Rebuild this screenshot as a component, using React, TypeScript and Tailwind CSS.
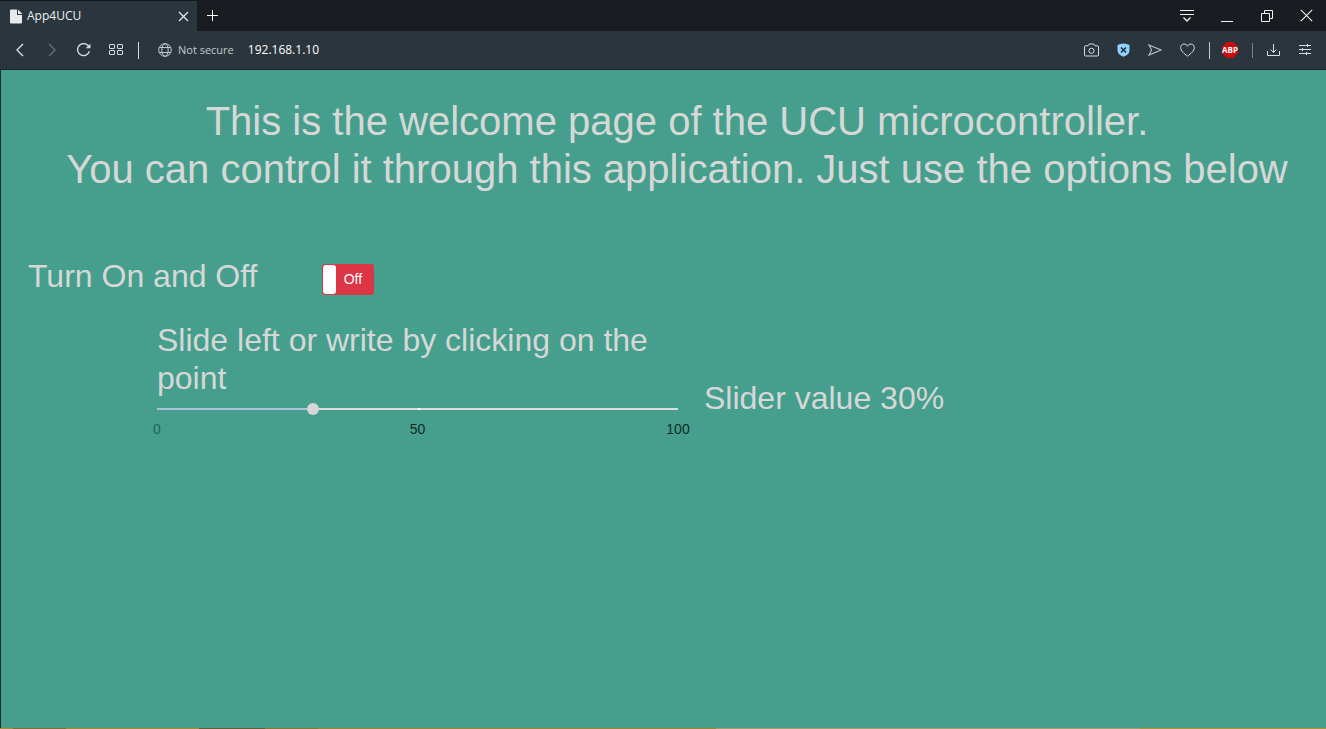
import { useState } from 'react';
import type { ReactNode } from 'react';

const iconProps = {
  fill: 'none',
  stroke: 'currentColor',
  strokeWidth: 1,
  'aria-hidden': true,
} as const;

function IconButton({ label, className = 'w-8', children }: { label: string; className?: string; children: ReactNode }) {
  return (
    <button type="button" aria-label={label} className={`flex h-8 shrink-0 items-center justify-center ${className}`}>
      {children}
    </button>
  );
}

function TabBar() {
  return (
    <div className="flex h-[31px] items-stretch bg-[#191d21]">
      <div className="flex w-[197px] items-center border-t border-[#14181c] bg-[#2b353d] pl-[10px] text-[#eceff1]">
        <svg width="13" height="15" viewBox="0 0 13 15" aria-hidden="true">
          <path d="M1 0.5H7V6H12V13.5Q12 14.5 11 14.5H1Q0 14.5 0 13.5V1.5Q0 0.5 1 0.5Z" fill="#e6eaec" />
          <path d="M8 0.5L12.5 5H8Z" fill="#e6eaec" />
        </svg>
        <span className="ml-1 flex-1 text-xs">App4UCU</span>
        <button type="button" aria-label="Close tab" className="flex h-7 w-7 items-center justify-center">
          <svg width="11" height="11" viewBox="0 0 11 11" {...iconProps}>
            <path d="M1 1L10 10M10 1L1 10" strokeWidth="1.2" />
          </svg>
        </button>
      </div>
      <button type="button" aria-label="New tab" className="flex w-[30px] items-center justify-center text-white">
        <svg width="11" height="11" viewBox="0 0 11 11" {...iconProps}>
          <path d="M5.5 0V11M0 5.5H11" />
        </svg>
      </button>
      <div className="ml-auto flex items-center text-[#f0f2f3]">
        <IconButton label="Tab menu" className="w-10">
          <svg width="14" height="14" viewBox="0 0 14 14" {...iconProps}>
            <path d="M0 1.5H14M0 5.5H14" />
            <path d="M3.5 8.5L7 12L10.5 8.5" strokeWidth="1.3" />
          </svg>
        </IconButton>
        <IconButton label="Minimize" className="w-10">
          <svg width="12" height="14" viewBox="0 0 12 14" {...iconProps}>
            <path d="M0 12.5H12" />
          </svg>
        </IconButton>
        <IconButton label="Restore" className="w-10">
          <svg width="12" height="12" viewBox="0 0 12 12" {...iconProps}>
            <path d="M0.5 3.5H8.5V11.5H0.5ZM3.5 3.5V0.5H11.5V8.5H8.5" />
          </svg>
        </IconButton>
        <IconButton label="Close window" className="w-[39px]">
          <svg width="13" height="13" viewBox="0 0 13 13" {...iconProps}>
            <path d="M0.8 0.8L12.2 12.2M12.2 0.8L0.8 12.2" strokeWidth="1.1" />
          </svg>
        </IconButton>
      </div>
    </div>
  );
}

function Toolbar() {
  return (
    <div className="flex h-[39px] items-center border-b border-[#142a2b] bg-[#2b353d] pl-1 text-[#d9dde0]">
      <IconButton label="Back">
        <svg width="8" height="14" viewBox="0 0 8 14" {...iconProps}>
          <path d="M7 1L1 7L7 13" strokeWidth="1.4" />
        </svg>
      </IconButton>
      <IconButton label="Forward" className="w-8 text-[#65717a]">
        <svg width="8" height="14" viewBox="0 0 8 14" {...iconProps}>
          <path d="M1 1L7 7L1 13" strokeWidth="1.3" />
        </svg>
      </IconButton>
      <IconButton label="Reload">
        <svg width="14" height="14" viewBox="0 0 14 14" {...iconProps}>
          <path d="M12.4 8.2A6 6 0 1 1 11.3 2.8L13 4.5" strokeWidth="1.3" />
          <path d="M13.4 0.6V5.3H8.8Z" fill="currentColor" stroke="none" />
        </svg>
      </IconButton>
      <IconButton label="Speed dial">
        <svg width="14" height="12" viewBox="0 0 14 12" {...iconProps}>
          <rect x="0.5" y="0.5" width="5" height="4" rx="0.5" />
          <rect x="8.5" y="0.5" width="5" height="4" rx="0.5" />
          <rect x="0.5" y="6.5" width="5" height="4" rx="0.5" />
          <rect x="8.5" y="6.5" width="5" height="4" rx="0.5" />
        </svg>
      </IconButton>
      <span className="ml-[6px] h-[17px] w-px bg-[#d5d9dc]" />
      <button type="button" className="ml-[19px] flex items-center gap-[6px] text-[11px] text-[#c3c9cd]">
        <svg width="14" height="14" viewBox="0 0 14 14" {...iconProps}>
          <circle cx="7" cy="7" r="6.3" />
          <ellipse cx="7" cy="7" rx="3.2" ry="6.3" />
          <path d="M1.5 4.5H12.5M1.5 9.5H12.5" />
        </svg>
        Not secure
      </button>
      <input
        aria-label="Address"
        defaultValue="192.168.1.10"
        className="ml-[14px] min-w-0 flex-1 bg-transparent text-xs text-white outline-none"
      />
      <IconButton label="Snapshot">
        <svg width="15" height="14" viewBox="0 0 15 14" {...iconProps}>
          <path d="M1.5 2.8H4L5.2 1H9.8L11 2.8H13.5Q14.5 2.8 14.5 3.8V12Q14.5 13 13.5 13H1.5Q0.5 13 0.5 12V3.8Q0.5 2.8 1.5 2.8Z" />
          <circle cx="7.5" cy="7.8" r="2.6" />
        </svg>
      </IconButton>
      <IconButton label="Ad blocker">
        <svg width="13" height="14" viewBox="0 0 13 14" aria-hidden="true">
          <path d="M2.5 1.3Q6.5 -0.4 10.5 1.3L12.5 2V7.5Q12.5 10.5 10 12L6.5 13.8L3 12Q0.5 10.5 0.5 7.5V2Z" fill="#90d2fb" />
          <path d="M4 4.5L9 9.5M9 4.5L4 9.5" stroke="#24303a" strokeWidth="1.6" fill="none" />
        </svg>
      </IconButton>
      <IconButton label="My flow" className="w-8 text-[#b8c0c5]">
        <svg width="14" height="12" viewBox="0 0 14 12" {...iconProps}>
          <path d="M1 0.9L13 6L1 11.1L3.6 6Z" strokeWidth="1.1" />
        </svg>
      </IconButton>
      <IconButton label="Add to bookmarks">
        <svg width="15" height="14" viewBox="0 0 15 14" {...iconProps}>
          <path d="M7.5 13.2C4 10.4 0.7 8 0.7 4.6C0.7 2.4 2.2 1 4 1C5.5 1 6.8 1.9 7.5 3.2C8.2 1.9 9.5 1 11 1C12.8 1 14.3 2.4 14.3 4.6C14.3 8 11 10.4 7.5 13.2Z" />
        </svg>
      </IconButton>
      <span className="ml-[6px] h-[17px] w-px bg-[#c5cacd]" />
      <IconButton label="Adblock Plus" className="ml-1 w-8">
        <svg width="16" height="16" viewBox="0 0 16 16" aria-hidden="true">
          <path d="M4.7 0H11.3L16 4.7V11.3L11.3 16H4.7L0 11.3V4.7Z" fill="#c70d10" />
          <text x="8" y="11" textAnchor="middle" fill="#ffffff" className="text-[8px] font-bold">ABP</text>
        </svg>
      </IconButton>
      <span className="ml-[6px] h-[15px] w-px bg-[#77828a]" />
      <IconButton label="Downloads" className="ml-1 w-8">
        <svg width="13" height="12" viewBox="0 0 13 12" {...iconProps}>
          <path d="M6.5 0V8M3.5 5.5L6.5 8.5L9.5 5.5M0.5 7V11.5H12.5V7" />
        </svg>
      </IconButton>
      <IconButton label="Easy setup" className="mr-[5px] w-8">
        <svg width="12" height="12" viewBox="0 0 12 12" {...iconProps}>
          <path d="M0 1.5H12M0 5.5H12M0 9.5H12M8.5 0V3M3.5 4V7M7.5 8V11" />
        </svg>
      </IconButton>
    </div>
  );
}

function PowerSwitch() {
  const [on, setOn] = useState(false);
  return (
    <button
      type="button"
      role="switch"
      aria-checked={on}
      aria-labelledby="power-label"
      onClick={() => setOn(!on)}
      className={`flex h-[31px] w-[52px] items-stretch rounded-[3px] p-px text-sm ${
        on ? 'flex-row-reverse bg-[#007bff]' : 'bg-[#dc3545]'
      }`}
    >
      <span className="w-[13px] rounded-[3px] bg-white" />
      <span className="flex-1 pr-1 text-center leading-7 text-white">{on ? 'On' : 'Off'}</span>
    </button>
  );
}

export default function App() {
  const [value, setValue] = useState(30);
  return (
    <div className="flex min-h-screen flex-col bg-[#459f8c]">
      <header className="font-['Open_Sans',sans-serif]">
        <TabBar />
        <Toolbar />
      </header>
      <main className="flex-1 border-l border-[#142a2b] pl-[27px] font-['Liberation_Sans',Arial,sans-serif] text-[#d6d8d7]">
        <h1 className="pt-[27px] text-center text-[40px] leading-[48px]">
          This is the welcome page of the UCU microcontroller.
          <br />
          You can control it through this application. Just use the options below
        </h1>
        <section className="mt-16 flex items-end gap-[65px]">
          <h2 id="power-label" className="text-[32px] leading-[38px]">
            Turn On and Off
          </h2>
          <PowerSwitch />
        </section>
        <section className="ml-[129px] mt-[26px] flex items-center gap-[26px]">
          <div className="w-[521px]">
            <label htmlFor="level" className="block text-[32px] leading-[38px]">
              Slide left or write by clicking on the point
            </label>
            <div className="relative mt-[5px] flex h-[14px] items-center">
              <div className="flex h-[2px] flex-1 bg-[#d8dcdb]">
                <div className="bg-[#a9c3dc]" style={{ width: `${value}%` }} />
              </div>
              <span className="absolute left-1/2 h-[2px] w-[2px] bg-white" />
              <input
                id="level"
                type="range"
                min={0}
                max={100}
                value={value}
                onChange={(e) => setValue(Number(e.target.value))}
                className="absolute -inset-x-[6px] h-[14px] appearance-none bg-transparent [&::-webkit-slider-thumb]:h-3 [&::-webkit-slider-thumb]:w-3 [&::-webkit-slider-thumb]:appearance-none [&::-webkit-slider-thumb]:rounded-full [&::-webkit-slider-thumb]:bg-[#d8d5d6]"
              />
            </div>
            <div className="-mx-5 mt-[3px] flex justify-between text-sm text-[#102b25]">
              <span className="w-10 text-center text-[#246352]">0</span>
              <span className="w-10 text-center">50</span>
              <span className="w-10 text-center">100</span>
            </div>
          </div>
          <output htmlFor="level" className="mt-9 text-[32px] leading-[38px]">
            Slider value {value}%
          </output>
        </section>
      </main>
      <footer className="flex h-px">
        <div className="w-[1%] bg-[#a78b35]" />
        <div className="w-[4%] bg-[#826b35]" />
        <div className="w-[10%] bg-[#a58734]" />
        <div className="w-[5%] bg-[#665b35]" />
        <div className="w-[4%] bg-[#8b7330]" />
        <div className="w-[30%] bg-[#a08235]" />
        <div className="w-[32%] bg-[#a39a70]" />
        <div className="flex-1 bg-[#ae9134]" />
      </footer>
    </div>
  );
}
